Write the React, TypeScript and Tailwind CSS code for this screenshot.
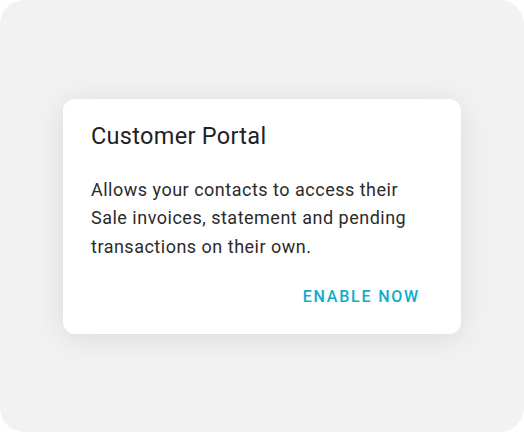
import React from 'react';

const App = () => {
  return (
    <div className="w-[524px] h-[432px] bg-white">
      <div className="w-full h-full rounded-[24px] bg-[#f2f2f2] flex items-center justify-center font-['Roboto',sans-serif]">
        {/* Card */}
        <div className="w-[398px] h-[235px] bg-white rounded-[12px] shadow-[0_4px_32px_rgba(0,0,0,0.1)] pt-[23px] px-7 flex flex-col">
          <h2 className="text-[23.5px] leading-[28px] font-normal tracking-[0.3px] text-[#222222]">Customer Portal</h2>
          <p className="mt-[26px] text-[18px] leading-[28.5px] tracking-[0.5px] text-[#2b2b2b]">
            Allows your contacts to access their
            <br />
            Sale invoices, statement and pending
            <br />
            transactions on their own.
          </p>
          <div className="mt-[17.5px] flex justify-end">
            <button className="px-[13px] py-2 text-[16px] leading-[20px] font-medium tracking-[1.8px] text-[#10acc9] uppercase">
              Enable Now
            </button>
          </div>
        </div>
      </div>
    </div>
  );
};

export default App;
